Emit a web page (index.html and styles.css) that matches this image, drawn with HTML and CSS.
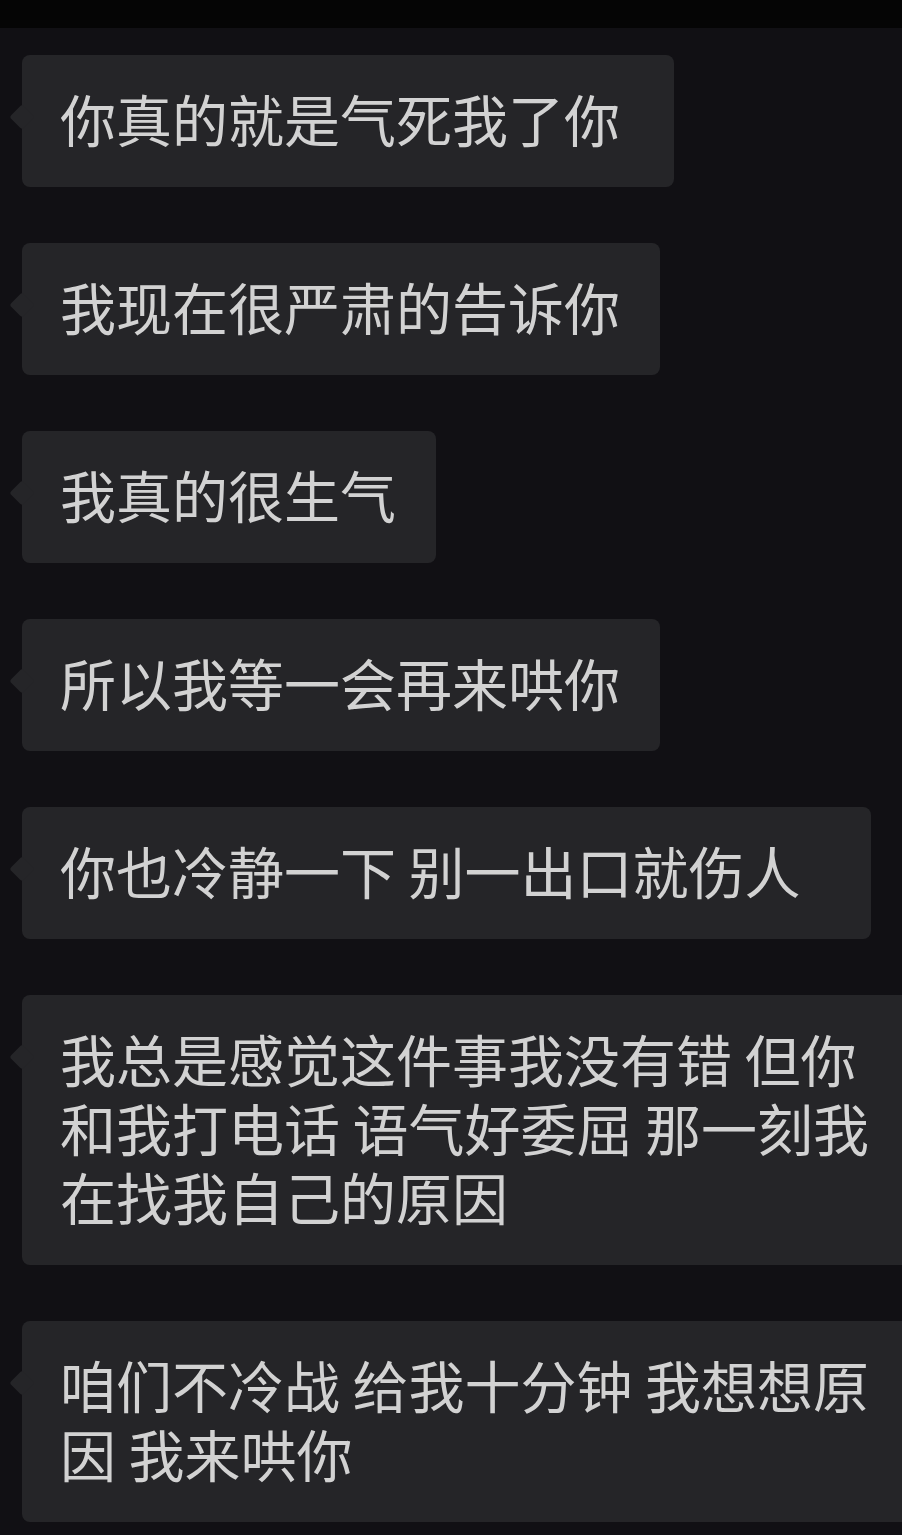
FILE: index.html
```html
<!DOCTYPE html>
<html lang="zh-CN">
<head>
  <meta charset="UTF-8">
  <title>聊天记录</title>
  <link rel="stylesheet" href="styles.css">
</head>
<body>
  <div id="barra"></div>

  <div id="messaggi">
    <div class="bolla coda-media">你真的就是气死我了你</div>
    <div class="bolla">我现在很严肃的告诉你</div>
    <div class="bolla">我真的很生气</div>
    <div class="bolla">所以我等一会再来哄你</div>
    <div class="bolla coda-lunga">你也冷静一下 别一出口就伤人</div>
    <div class="bolla">我总是感觉这件事我没有错 但你和我打电话 语气好委屈 那一刻我在找我自己的原因</div>
    <div class="bolla">咱们不冷战 给我十分钟 我想想原因 我来哄你</div>
  </div>
</body>
</html>
```

FILE: styles.css
```css
html, body {
  margin: 0;
  padding: 0;
  background-color: #111014;
  overflow: hidden;
  font-family: "Noto Sans CJK SC", "Noto Sans", sans-serif;
}

#barra {
  height: 28px;
  background: #050505;
}

#messaggi {
  display: flex;
  flex-direction: column;
  align-items: flex-start;
  gap: 56px;
  padding: 27px 0 0 22px;
}

.bolla {
  position: relative;
  width: max-content;
  max-width: 830px;
  padding: 28px 40px 35px 38px;
  background: #252528;
  border-radius: 8px;
  color: #d2d2d2;
  font-size: 56px;
  line-height: 69px;
}

/* piccola punta a sinistra */
.bolla::before {
  content: "";
  position: absolute;
  left: -9px;
  top: 53px;
  width: 18px;
  height: 18px;
  background: #252528;
  border-radius: 3px;
  transform: rotate(45deg);
}

.coda-media { padding-right: 54px; }
.coda-lunga { padding-right: 70px; }
```
